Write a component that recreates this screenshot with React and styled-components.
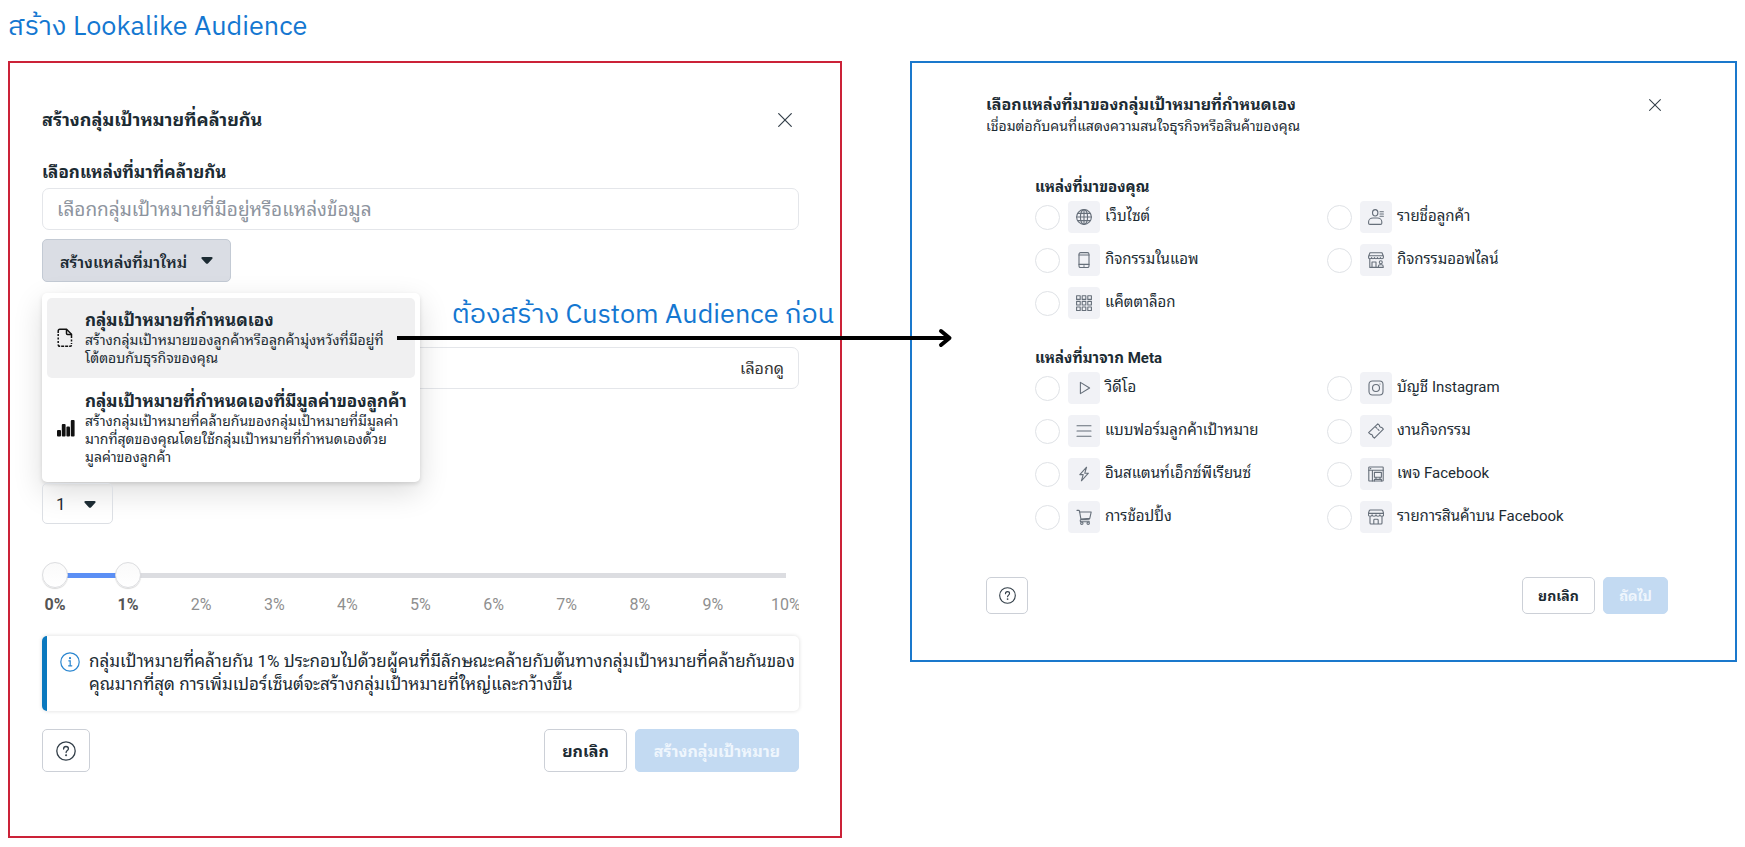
import React, { useState } from 'react'
import styled, { createGlobalStyle, css } from 'styled-components'

const GlobalStyle = createGlobalStyle`
    * {
        box-sizing: border-box;
    }

    body {
        margin: 0;
        background-color: #fff;
        color: #1c2b33;
        font-family: Roboto, "Noto Sans Thai Looped", Sarabun, Loma, "Noto Sans Thai", "Noto Sans", sans-serif;
    }

    h1, h2, h3, p, ul, fieldset {
        margin: 0;
        padding: 0;
        border: 0;
    }

    ul {
        list-style: none;
    }

    button, input, select {
        font-family: inherit;
        color: inherit;
        margin: 0;
    }
`

const Page = styled.main`
    padding: 0 8px 9px;
`

const PageTitle = styled.h1`
    height: 61px;
    padding-top: 7px;
    font-family: "IBM Plex Sans Thai", "IBM Plex Sans", "Noto Sans", "Noto Sans Thai", sans-serif;
    font-size: 27px;
    line-height: 40px;
    font-weight: 400;
    color: #1477d1;
`

const Board = styled.div`
    position: relative;
    display: grid;
    grid-template-columns: minmax(0, 834fr) minmax(0, 827fr);
    column-gap: 68px;
    align-items: start;
`

const Panel = styled.section`
    border: 2px solid ${({ $color }) => $color};
    padding: ${({ $padding }) => $padding};
`

const PanelHeader = styled.header`
    display: flex;
    align-items: center;
    justify-content: space-between;
`

const PanelTitle = styled.h2`
    font-size: ${({ $size }) => $size}px;
    line-height: 20px;
    font-weight: 700;
    white-space: nowrap;
`

const PanelDesc = styled.p`
    font-size: 14px;
    line-height: 20px;
    white-space: nowrap;
`

const CloseButton = styled.button`
    display: flex;
    padding: 5px 7px;
    border: 0;
    background: none;
`

const FieldLabel = styled.label`
    display: block;
    margin-top: 30px;
    font-size: 17px;
    line-height: 20px;
    font-weight: 700;
`

const SourceInput = styled.input`
    display: block;
    width: 100%;
    height: 42px;
    margin-top: 6px;
    padding: 0 14px;
    border: 1px solid #e4e6ea;
    border-radius: 7px;
    font-size: 19px;
    background: none;

    &::placeholder {
        color: #8d949e;
        opacity: 1;
    }
`

const MenuAnchor = styled.div`
    position: relative;
    margin-top: 9px;
`

const MenuButton = styled.button`
    display: flex;
    align-items: center;
    gap: 14px;
    height: 43px;
    padding: 0 17px;
    border: 1px solid #c3cad4;
    border-radius: 5px;
    background-color: #dadde4;
    font-size: 16px;
    font-weight: 600;
`

const Menu = styled.ul`
    position: absolute;
    top: 54px;
    left: 0;
    width: 378px;
    padding: 5px;
    border-radius: 5px;
    background-color: #fff;
    box-shadow: 0 2px 4px rgba(0, 0, 0, 0.12), 0 10px 30px rgba(0, 0, 0, 0.14);
`

const MenuItem = styled.button`
    display: grid;
    grid-template-columns: 20px 1fr;
    column-gap: 8px;
    align-items: center;
    width: 100%;
    height: ${({ $height }) => $height}px;
    padding: 0 0 0 10px;
    border: 0;
    border-radius: 5px;
    background-color: ${({ $active }) => ($active ? '#f0f0f1' : 'transparent')};
    text-align: left;
`

const MenuItemTitle = styled.span`
    display: block;
    font-size: 17px;
    line-height: 22px;
    font-weight: 700;
    white-space: nowrap;
`

const MenuItemDesc = styled.span`
    display: block;
    font-size: 14px;
    line-height: 18px;
    white-space: pre;
`

const LocationField = styled.div`
    display: flex;
    margin-top: 65px;
    height: 42px;
    border: 1px solid #e4e6ea;
    border-radius: 7px;
`

const LocationInput = styled.input`
    flex: 1;
    min-width: 0;
    border: 0;
    background: none;
`

const BrowseButton = styled.button`
    padding: 0 14px 2px;
    border: 0;
    background: none;
    font-size: 16px;
    color: #333;
`

const CountBox = styled.div`
    position: relative;
    width: 71px;
    margin-top: 94px;

    & > svg {
        position: absolute;
        right: 17px;
        top: 18px;
        pointer-events: none;
    }
`

const CountSelect = styled.select`
    appearance: none;
    display: block;
    width: 100%;
    height: 41px;
    padding: 0 13px;
    border: 1px solid #dcdfe4;
    border-radius: 5px;
    background: none;
    font-size: 17px;
`

const SliderBox = styled.div`
    position: relative;
    height: 26px;
    margin-top: 38px;
    padding: 11px 13px 0;
`

const Track = styled.div`
    height: 5px;
    background-color: #dcdde1;
`

const TrackFill = styled.div`
    height: 5px;
    background-color: #5b8ff5;
`

const thumb = css`
    appearance: none;
    width: 26px;
    height: 26px;
    border: 1px solid #dcdde0;
    border-radius: 50%;
    background: linear-gradient(#fafafa, #fff);
    box-shadow: 0 1px 1px rgba(0, 0, 0, 0.15);
    pointer-events: auto;
`

const Range = styled.input`
    appearance: none;
    position: absolute;
    top: 0;
    left: 0;
    width: 100%;
    height: 26px;
    background: none;
    pointer-events: none;

    &::-webkit-slider-thumb {
        ${thumb}
    }

    &::-moz-range-thumb {
        ${thumb}
    }
`

const ScaleList = styled.ul`
    display: flex;
    justify-content: space-between;
    overflow: hidden;
    margin-top: 5px;
`

const ScaleItem = styled.li`
    display: flex;
    justify-content: center;
    width: 26px;
    font-size: 16px;
    line-height: 24px;
    font-weight: ${({ $selected }) => ($selected ? 700 : 400)};
    color: ${({ $selected }) => ($selected ? '#555' : '#8f8f8f')};
`

const Notice = styled.div`
    display: flex;
    gap: 9px;
    margin-top: 19px;
    padding: 14px 0 15px 13px;
    border-left: 5px solid #0a78be;
    border-radius: 5px;
    box-shadow: 0 0 4px rgba(0, 0, 0, 0.14);

    & > svg {
        flex: none;
        margin-top: 2px;
    }
`

const NoticeText = styled.p`
    font-size: 17px;
    line-height: 23px;
    white-space: pre;
`

const PanelFooter = styled.footer`
    display: flex;
    gap: 8px;
    height: ${({ $height }) => $height}px;
    margin-top: ${({ $top }) => $top}px;
    font-size: ${({ $size }) => $size}px;
`

const FooterButton = styled.button`
    display: flex;
    align-items: center;
    justify-content: center;
    width: ${({ $width }) => $width}px;
    padding: 0 0 2px;
    border: 1px solid #ccd0d7;
    border-radius: 5px;
    background-color: #fff;
    font-size: inherit;
    font-weight: 700;
    white-space: nowrap;
`

const HelpButton = styled(FooterButton)`
    margin-right: auto;
    padding: 0;
`

const PrimaryButton = styled(FooterButton)`
    border-color: #c3daf2;
    background-color: #c3daf2;
    color: #eff6fd;
`

const SourceGroup = styled.fieldset`
    margin-top: ${({ $top }) => $top}px;
    margin-left: 49px;
    min-width: 0;
`

const GroupTitle = styled.legend`
    height: 24px;
    padding: 0;
    font-size: 15px;
    line-height: 20px;
    font-weight: 700;
`

const SourceGrid = styled.ul`
    display: grid;
    grid-template-columns: 292px 1fr;
    row-gap: 11px;
`

const SourceLabel = styled.label`
    display: flex;
    align-items: center;
    height: 32px;
    font-size: 15px;
    line-height: 20px;
    white-space: nowrap;
`

const SourceName = styled.span`
    padding-bottom: 2px;
`

const Radio = styled.input`
    appearance: none;
    width: 25px;
    height: 25px;
    border: 1px solid #dfe2e6;
    border-radius: 50%;
    background-color: #fff;

    &:checked {
        border: 7px solid #0a78be;
    }
`

const IconTile = styled.span`
    display: flex;
    align-items: center;
    justify-content: center;
    width: 32px;
    height: 32px;
    margin: 0 5px 0 8px;
    border-radius: 4px;
    background-color: #f1f2f6;
`

const LineIcon = styled.svg`
    fill: none;
    stroke: #666f7a;
    stroke-width: 1.1;
    stroke-linecap: round;
    stroke-linejoin: round;
`

const Arrow = styled.svg`
    position: absolute;
    top: 267px;
    left: 389px;
    pointer-events: none;
`

const ArrowNote = styled.p`
    position: absolute;
    top: 234px;
    left: 444px;
    font-family: "IBM Plex Sans Thai", "IBM Plex Sans", "Noto Sans", "Noto Sans Thai", sans-serif;
    font-size: 27px;
    line-height: 40px;
    color: #1477d1;
    white-space: nowrap;
`

const icons = {
    globe: (
        <>
            <circle cx="8" cy="8" r="7.4" />
            <ellipse cx="8" cy="8" rx="3.6" ry="7.4" />
            <path d="M8 .6v14.8M.6 8h14.8M1.6 4.4h12.8M1.6 11.6h12.8" />
        </>
    ),
    phone: (
        <>
            <rect x="3" y=".6" width="10" height="15" rx="1.6" />
            <path d="M3 3h10M3 12.4h10M7.6 14h.8" />
        </>
    ),
    grid: (
        <path d="M.6.8h3.6v3.6H.6zM6.2.8h3.6v3.6H6.2zM11.8.8h3.6v3.6h-3.6zM.6 6.4h3.6V10H.6zM6.2 6.4h3.6V10H6.2zM11.8 6.4h3.6V10h-3.6zM.6 12h3.6v3.6H.6zM6.2 12h3.6v3.6H6.2zM11.8 12h3.6v3.6h-3.6z" />
    ),
    customers: (
        <>
            <ellipse cx="7.2" cy="3.8" rx="2.7" ry="3.2" />
            <path d="M.6 14.2v-1.4c0-2.2 2-3.8 4.4-3.8h4.4c2.4 0 4.4 1.6 4.4 3.8v1.4c0 .8-.5 1.2-1.3 1.2H1.9c-.8 0-1.3-.4-1.3-1.2zM12 2.8h3.4M12 5h3.4M12 7.2h3.4" />
        </>
    ),
    offline: (
        <>
            <path d="M2 .8h12l1.4 3.4v1.4c0 .8-.6 1.2-1.5 1.2s-1.5-.4-1.5-1.2c0 .8-.6 1.2-1.4 1.2s-1.5-.4-1.5-1.2c0 .8-.7 1.2-1.5 1.2s-1.5-.4-1.5-1.2c0 .8-.6 1.2-1.5 1.2s-1.4-.4-1.4-1.2c0 .8-.6 1.2-1.5 1.2S.6 6.4.6 5.6V4.2zM.8 3.8h14.4M1.8 7v8.4h8M4 15.2V10h4v5.2" />
            <circle cx="12.8" cy="10.2" r="1.5" />
            <path d="M10.4 15.4v-1c0-1 .8-1.6 1.6-1.6h1.6c.9 0 1.6.6 1.6 1.6v1z" />
        </>
    ),
    video: <path d="M4.4 2.4v11.2L13.6 8z" />,
    form: <path d="M1 2.8h14M1 8h14M1 13.2h14" />,
    bolt: <path d="M10.6 1.2 3.8 8.6h3.4L5.4 14.8l7-7.6H8.8z" />,
    cart: (
        <>
            <path d="M1 1.4h1.6c.5 0 .8.3.9.8L5 10.6h8.2M3.4 3h11.8l-1.4 6.4-9 .6M5 10.6c-1.2.4-1 2.2.2 2.2h8.2" />
            <circle cx="5.8" cy="14.2" r="1.2" />
            <circle cx="12.2" cy="14.2" r="1.2" />
        </>
    ),
    instagram: (
        <>
            <rect x="1" y="1" width="14" height="14" rx="3.4" />
            <circle cx="8" cy="8" r="3.5" />
            <path d="M12 4h.1" />
        </>
    ),
    ticket: (
        <>
            <path d="m9.800.8 1.700 1.600c-.2 1.200 1 2.300 2.200 2l1.700 1.700-9 9-1.800-1.600c.3-1.200-.8-2.400-2-2.100L.6 9.600z" />
            <path d="m7.6 4 1.2 1.2M9.8 6.2 11 7.4" />
        </>
    ),
    page: (
        <>
            <rect x=".8" y="1" width="14.4" height="14" rx=".6" />
            <path d="M.8 4.2h14.4M4.4 4.2V15M2.4 2.6h.4M6.4 6.4h7v4.8h-7zM6.4 15v-1.6h7V15M8 11.2v2.2M12 11.2v2.2" />
        </>
    ),
    shop: (
        <path d="M2.4 1h11.2c.6 0 1 .3 1.2.8l.8 2.6v1.4c0 .9-.7 1.4-1.7 1.4s-2-.5-2-1.4c0 .9-.9 1.4-1.9 1.4s-2-.5-2-1.4c0 .9-1 1.4-2 1.4s-1.9-.5-1.9-1.4c0 .9-1 1.4-2 1.4S.4 6.7.4 5.800V4.400l.8-2.600C1.400 1.300 1.800 1 2.400 1zM.5 4.400h15M2 7.400V14c0 .6.3 1 .9 1h10.200c.6 0 .9-.4.9-1V7.400M5.800 15v-3.800c0-.6.3-.9.9-.9h2.600c.6 0 .9.3.9.9V15" />
    ),
}

const yourSources = [
    { id: 'website', icon: 'globe', label: 'เว็บไซต์' },
    { id: 'customers', icon: 'customers', label: 'รายชื่อลูกค้า' },
    { id: 'app', icon: 'phone', label: 'กิจกรรมในแอพ' },
    { id: 'offline', icon: 'offline', label: 'กิจกรรมออฟไลน์' },
    { id: 'catalog', icon: 'grid', label: 'แค็ตตาล็อก' },
]

const metaSources = [
    { id: 'video', icon: 'video', label: 'วิดีโอ' },
    { id: 'instagram', icon: 'instagram', label: 'บัญชี Instagram' },
    { id: 'leadForm', icon: 'form', label: 'แบบฟอร์มลูกค้าเป้าหมาย' },
    { id: 'events', icon: 'ticket', label: 'งานกิจกรรม' },
    { id: 'instant', icon: 'bolt', label: 'อินสแตนท์เอ็กซ์พีเรียนซ์' },
    { id: 'page', icon: 'page', label: 'เพจ Facebook' },
    { id: 'shopping', icon: 'cart', label: 'การช้อปปิ้ง' },
    { id: 'listing', icon: 'shop', label: 'รายการสินค้าบน Facebook' },
]

const scale = [0, 1, 2, 3, 4, 5, 6, 7, 8, 9, 10]

function Caret() {
    return (
        <svg width="12" height="7" viewBox="0 0 12 7" fill="#1c2b33">
            <path d="M1.5 0h9c1 0 1.5 1 .8 1.7L7.2 6.2c-.7.8-1.7.8-2.4 0L.7 1.7C0 1 .5 0 1.5 0z" />
        </svg>
    )
}

function CloseIcon({ size }) {
    return (
        <svg width={size} height={size} viewBox="0 0 14 14" stroke="#333f49" strokeWidth="1.2" strokeLinecap="round">
            <path d="m.7.7 12.6 12.6M13.3.7.7 13.3" />
        </svg>
    )
}

function HelpIcon({ size }) {
    return (
        <svg width={size} height={size} viewBox="0 0 20 20" fill="none" stroke="#333f49" strokeWidth="1.3" strokeLinecap="round">
            <circle cx="10" cy="10" r="9.2" />
            <path d="M7.6 8c0-1.5 1-2.5 2.4-2.5s2.4.9 2.4 2.2c0 1.8-2.3 1.9-2.3 3.8" />
            <circle cx="10.1" cy="14.2" r=".4" fill="#333f49" />
        </svg>
    )
}

function SourceOptions({ title, sources, top }) {
    return (
        <SourceGroup $top={top}>
            <GroupTitle>{title}</GroupTitle>
            <SourceGrid>
                {sources.map(({ id, icon, label }) => (
                    <li key={id}>
                        <SourceLabel htmlFor={id}>
                            <Radio type="radio" id={id} name="source" />
                            <IconTile>
                                <LineIcon width="16" height="16" viewBox="0 0 16 16">{icons[icon]}</LineIcon>
                            </IconTile>
                            <SourceName>{label}</SourceName>
                        </SourceLabel>
                    </li>
                ))}
            </SourceGrid>
        </SourceGroup>
    )
}

function LookalikePanel() {
    const [from, setFrom] = useState(0)
    const [to, setTo] = useState(1)

    return (
        <Panel $color="#cb2238" $padding="45px 41px 64px 32px">
            <PanelHeader>
                <PanelTitle $size={18}>สร้างกลุ่มเป้าหมายที่คล้ายกัน</PanelTitle>
                <CloseButton aria-label="ปิด"><CloseIcon size={14} /></CloseButton>
            </PanelHeader>
            <FieldLabel htmlFor="sourceInput">เลือกแหล่งที่มาที่คล้ายกัน</FieldLabel>
            <SourceInput type="text" id="sourceInput" placeholder="เลือกกลุ่มเป้าหมายที่มีอยู่หรือแหล่งข้อมูล" />
            <MenuAnchor>
                <MenuButton>
                    สร้างแหล่งที่มาใหม่
                    <Caret />
                </MenuButton>
                <Menu>
                    <li>
                        <MenuItem $active $height={80}>
                            <svg width="16" height="20" viewBox="0 0 16 20" fill="none" stroke="#111" strokeWidth="1.5">
                                <path d="M1.2 5V3c0-1 .6-1.7 1.6-1.7h6.7l5 5V8" />
                                <path d="M9.5 1.5v4c0 .6.3 1 1 1h4" />
                                <path d="M1.2 6v10M14.5 8v8" strokeDasharray="2 1.5" />
                                <path d="M1.2 16.5c0 1.2.6 1.8 1.8 1.8h10c1 0 1.5-.6 1.5-1.8" strokeDasharray="3 1" />
                            </svg>
                            <span>
                                <MenuItemTitle>กลุ่มเป้าหมายที่กำหนดเอง</MenuItemTitle>
                                <MenuItemDesc>{'สร้างกลุ่มเป้าหมายของลูกค้าหรือลูกค้ามุ่งหวังที่มีอยู่ที่\nโต้ตอบกับธุรกิจของคุณ'}</MenuItemDesc>
                            </span>
                        </MenuItem>
                    </li>
                    <li>
                        <MenuItem $height={99}>
                            <svg width="18" height="18" viewBox="0 0 18 18" fill="#111">
                                <rect x="0" y="11" width="4" height="6.5" rx="1" />
                                <rect x="4.8" y="5" width="3.8" height="12.5" rx="1" />
                                <rect x="9.4" y="7.5" width="3.6" height="10" rx="1" />
                                <rect x="13.8" y="1" width="3.8" height="16.5" rx="1" />
                            </svg>
                            <span>
                                <MenuItemTitle>กลุ่มเป้าหมายที่กำหนดเองที่มีมูลค่าของลูกค้า</MenuItemTitle>
                                <MenuItemDesc>{'สร้างกลุ่มเป้าหมายที่คล้ายกันของกลุ่มเป้าหมายที่มีมูลค่า\nมากที่สุดของคุณโดยใช้กลุ่มเป้าหมายที่กำหนดเองด้วย\nมูลค่าของลูกค้า'}</MenuItemDesc>
                            </span>
                        </MenuItem>
                    </li>
                </Menu>
            </MenuAnchor>
            <LocationField>
                <LocationInput type="text" aria-label="ตำแหน่งที่ตั้ง" />
                <BrowseButton>เลือกดู</BrowseButton>
            </LocationField>
            <CountBox>
                <CountSelect aria-label="จำนวนกลุ่มเป้าหมาย" defaultValue="1">
                    {scale.slice(1, 7).map((n) => <option key={n} value={n}>{n}</option>)}
                </CountSelect>
                <Caret />
            </CountBox>
            <SliderBox>
                <Track>
                    <TrackFill style={{ marginLeft: `${from * 10}%`, width: `${(to - from) * 10}%` }} />
                </Track>
                <Range type="range" min="0" max="10" value={from} aria-label="เริ่มต้น" onChange={(e) => setFrom(Math.min(+e.target.value, to))} />
                <Range type="range" min="0" max="10" value={to} aria-label="สิ้นสุด" onChange={(e) => setTo(Math.max(+e.target.value, from))} />
            </SliderBox>
            <ScaleList>
                {scale.map((n) => <ScaleItem key={n} $selected={n === from || n === to}>{n}%</ScaleItem>)}
            </ScaleList>
            <Notice>
                <svg width="20" height="20" viewBox="0 0 20 20" fill="none" stroke="#2a86d0" strokeWidth="1.2" strokeLinecap="round">
                    <circle cx="10" cy="10" r="9.2" />
                    <path d="M8.8 8.8h1.4v4.8M8.6 13.8h3.2" />
                    <circle cx="10" cy="6.2" r=".5" fill="#2a86d0" />
                </svg>
                <NoticeText>{'กลุ่มเป้าหมายที่คล้ายกัน 1% ประกอบไปด้วยผู้คนที่มีลักษณะคล้ายกับต้นทางกลุ่มเป้าหมายที่คล้ายกันของ\nคุณมากที่สุด การเพิ่มเปอร์เซ็นต์จะสร้างกลุ่มเป้าหมายที่ใหญ่และกว้างขึ้น'}</NoticeText>
            </Notice>
            <PanelFooter $top={18} $height={43} $size={16}>
                <HelpButton $width={48} aria-label="ช่วยเหลือ"><HelpIcon size={20} /></HelpButton>
                <FooterButton $width={83}>ยกเลิก</FooterButton>
                <PrimaryButton $width={164}>สร้างกลุ่มเป้าหมาย</PrimaryButton>
            </PanelFooter>
        </Panel>
    )
}

function CustomSourcePanel() {
    return (
        <Panel $color="#1a78cc" $padding="31px 67px 46px 74px">
            <PanelHeader>
                <PanelTitle $size={16}>เลือกแหล่งที่มาของกลุ่มเป้าหมายที่กำหนดเอง</PanelTitle>
                <CloseButton aria-label="ปิด"><CloseIcon size={12} /></CloseButton>
            </PanelHeader>
            <PanelDesc>เชื่อมต่อกับคนที่แสดงความสนใจธุรกิจหรือสินค้าของคุณ</PanelDesc>
            <SourceOptions title="แหล่งที่มาของคุณ" sources={yourSources} top={41} />
            <SourceOptions title="แหล่งที่มาจาก Meta" sources={metaSources} top={29} />
            <PanelFooter $top={44} $height={37} $size={14}>
                <HelpButton $width={42} aria-label="ช่วยเหลือ"><HelpIcon size={17} /></HelpButton>
                <FooterButton $width={73}>ยกเลิก</FooterButton>
                <PrimaryButton $width={65}>ถัดไป</PrimaryButton>
            </PanelFooter>
        </Panel>
    )
}

export default function App() {
    return (
        <>
            <GlobalStyle />
            <Page>
                <PageTitle>สร้าง Lookalike Audience</PageTitle>
                <Board>
                    <LookalikePanel />
                    <CustomSourcePanel />
                    <ArrowNote>ต้องสร้าง Custom Audience ก่อน</ArrowNote>
                    <Arrow width="556" height="20" viewBox="0 0 556 20" fill="none" stroke="#000" strokeWidth="4">
                        <path d="M0 10h552" />
                        <path d="m544 3 8.5 7-8.5 7" strokeLinecap="round" strokeLinejoin="round" />
                    </Arrow>
                </Board>
            </Page>
        </>
    )
}
